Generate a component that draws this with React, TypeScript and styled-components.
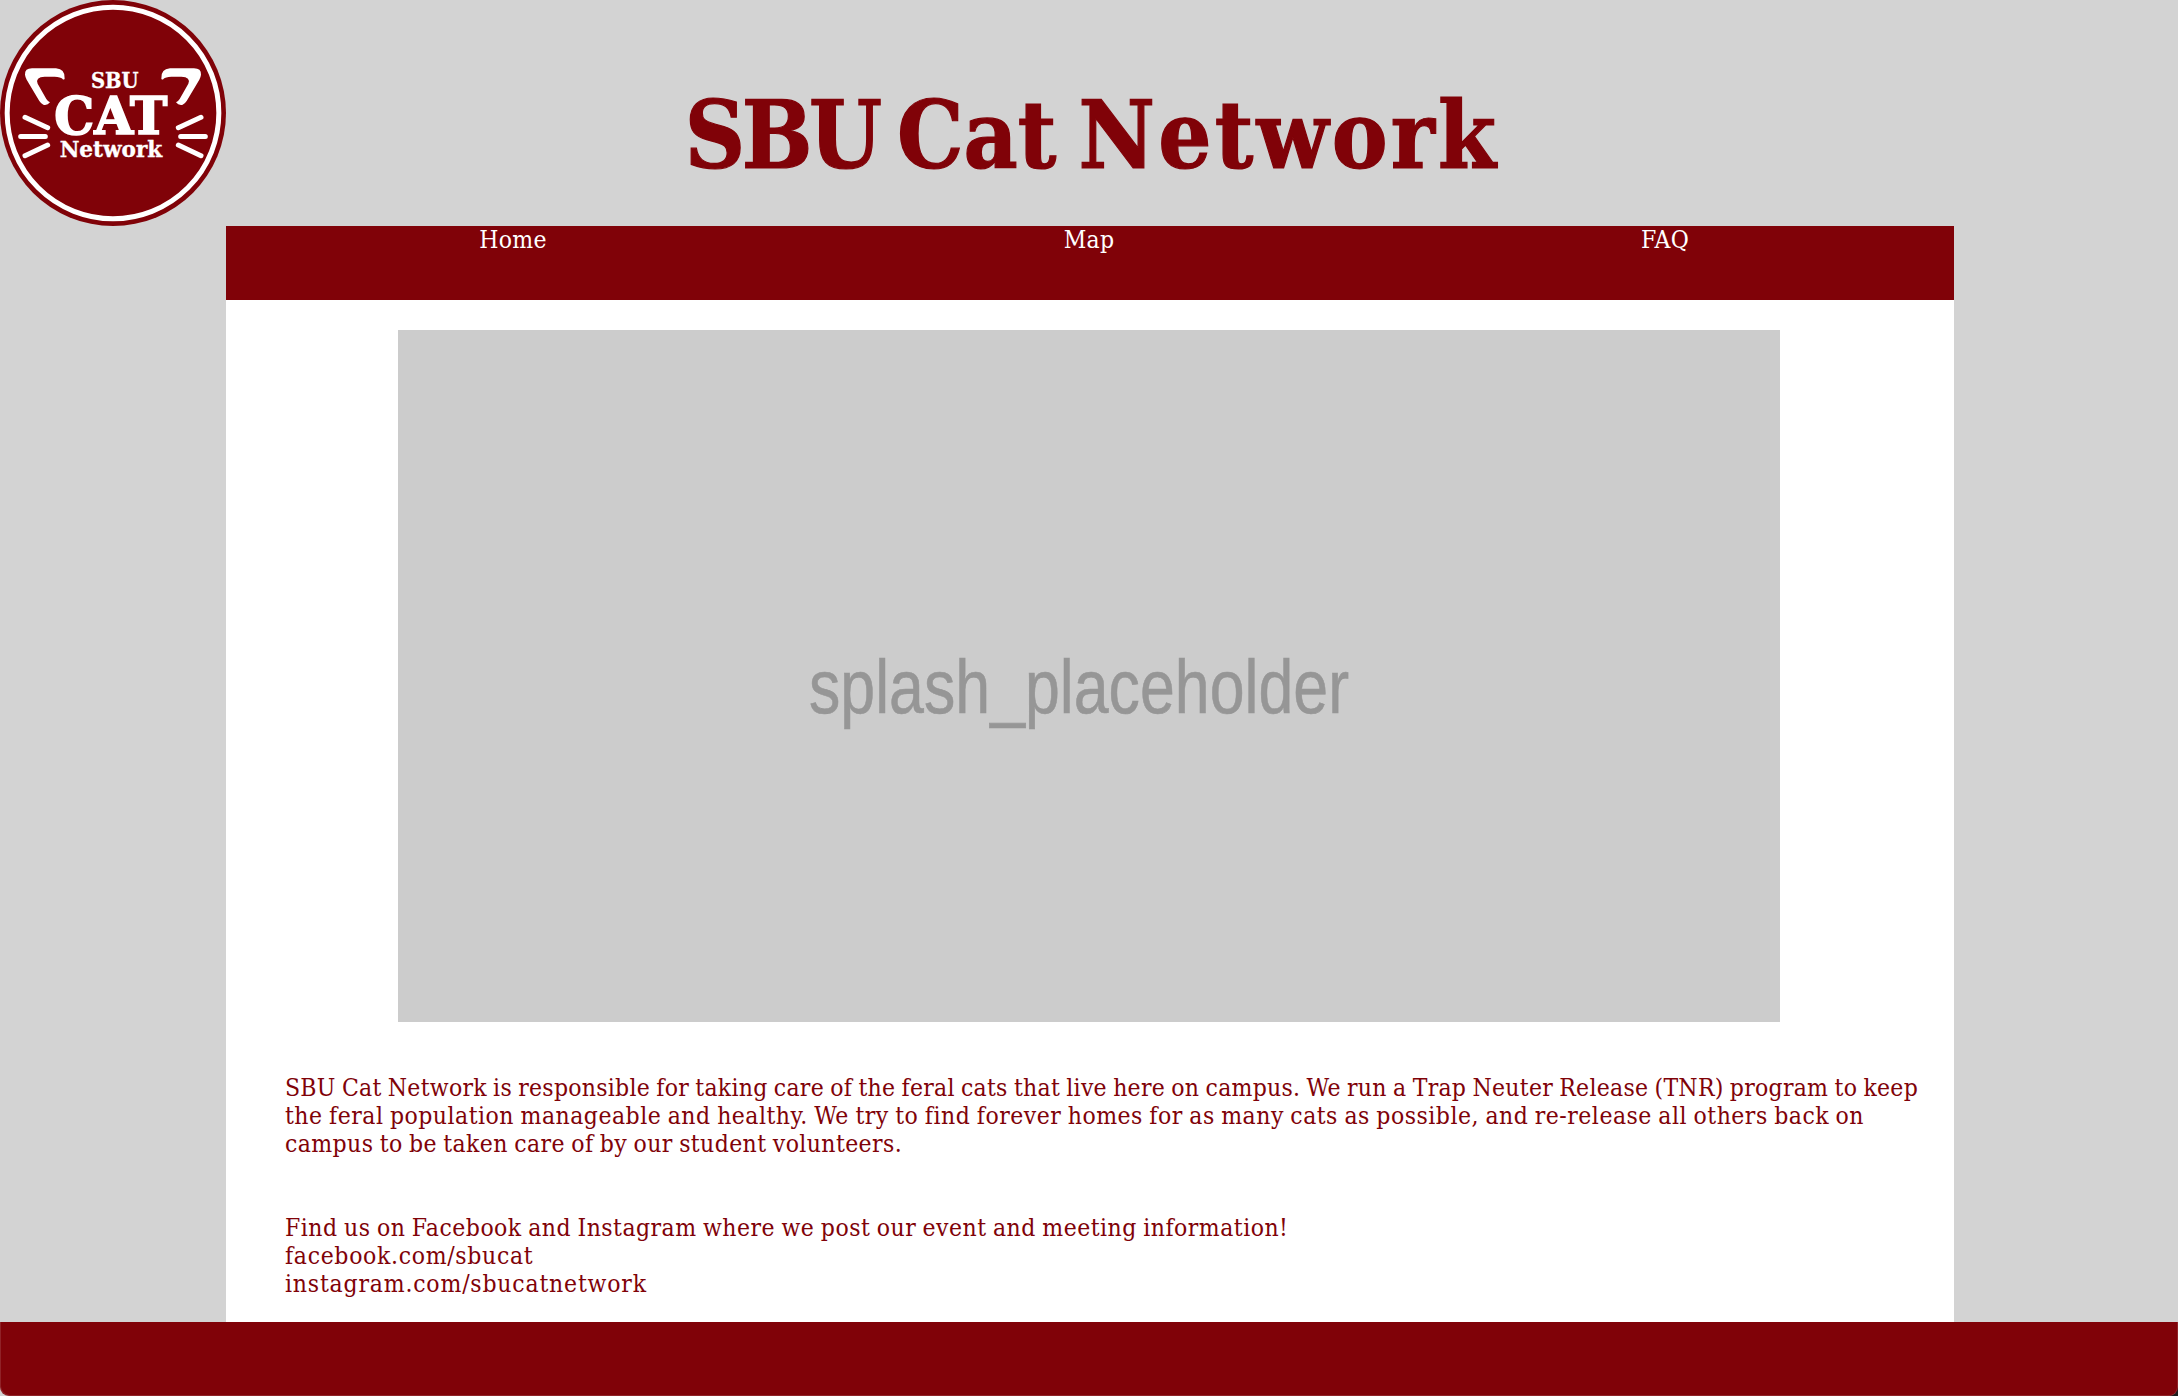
import React from 'react';
import styled, { createGlobalStyle } from 'styled-components';

const maroon = '#800208';
const slab = '"DejaVu Serif Condensed", "DejaVu Serif", serif';

const GlobalStyle = createGlobalStyle`
  body {
    margin: 0;
    background: #d3d3d3;
    font-family: ${slab};
    color: ${maroon};
  }
`;

const Page = styled.div`
  display: flex;
  flex-direction: column;
  height: 1396px;
  overflow: hidden;
`;

const Header = styled.header`
  display: grid;
  grid-template-columns: 226px 1728px 1fr;
  height: 226px;
`;

const Title = styled.h1`
  display: flex;
  align-items: center;
  justify-content: center;
  margin: 0;
  padding: 44px 0 0 4px;
  font-size: 93px;
  line-height: 1;
  font-weight: bold;
  white-space: pre;
  word-spacing: -7px;
  -webkit-text-stroke: 1.2px ${maroon};
`;

const Word = styled.span<{ $tracking: number }>`
  letter-spacing: ${(p) => p.$tracking}px;
`;

const Column = styled.div`
  display: flex;
  flex-direction: column;
  width: 1728px;
  height: 1096px;
  margin-left: 226px;
  background: #fff;
`;

const Nav = styled.nav`
  display: grid;
  grid-template-columns: repeat(3, 1fr);
  height: 74px;
  background: ${maroon};
`;

const NavLink = styled.a`
  padding-right: 2px;
  color: #fff;
  font-size: 24.5px;
  letter-spacing: 0.3px;
  line-height: 28px;
  text-align: center;
`;

const Splash = styled.figure`
  display: flex;
  width: 1382px;
  height: 692px;
  margin: 30px 0 52px 172px;
  background: #ccc;
`;

const Copy = styled.main`
  display: flex;
  flex-direction: column;
  gap: 56px;
  padding-left: 59px;
`;

const Paragraph = styled.p`
  margin: 0;
  font-size: 24.5px;
  line-height: 28px;
  word-spacing: -1px;
`;

const Line = styled.span<{ $tracking: number }>`
  display: block;
  white-space: nowrap;
  letter-spacing: ${(p) => p.$tracking}px;
`;

const FooterArea = styled.div`
  height: 74px;
  background: linear-gradient(to right, #d3d3d3 50%, #1c1c1c 50%);
`;

const Footer = styled.footer`
  height: 74px;
  border-radius: 0 0 9px 9px;
  background: ${maroon};
  box-shadow: inset 1px -1px 0 rgba(255, 255, 255, 0.13), inset -1px 0 0 rgba(255, 255, 255, 0.13);
`;

const EarAndWhiskers = () => (
  <>
    <path
      fill="#fff"
      d="M75 224Q74 205 96 205H168Q196 207 194 236Q191 241 187 236Q182 231 164 230H134Q105 231 113 251L139 297Q145 306 150 307Q142 317 130 314Q124 312 118 303L80 239Q76 232 75 224Z"
    />
    <path
      stroke="#fff"
      strokeWidth="15"
      strokeLinecap="round"
      fill="none"
      d="M75 352L143 383M62 409.500H136M75 467L143 435"
    />
  </>
);

const Logo = () => (
  <svg width="226" height="226" viewBox="0 0 678 678" role="img">
    <circle cx="339" cy="339" r="339" fill={maroon} />
    <circle cx="339" cy="339" r="317.500" fill="none" stroke="#fff" strokeWidth="15" />
    <EarAndWhiskers />
    <g transform="translate(678 0) scale(-1 1)">
      <EarAndWhiskers />
    </g>
    <g fill="#fff" stroke="#fff" fontFamily={slab} fontWeight="bold">
      <text x="273" y="265" fontSize="66" strokeWidth="1" textLength="143" lengthAdjust="spacingAndGlyphs">SBU</text>
      <text x="163" y="403" fontSize="157" strokeWidth="5" textLength="339" lengthAdjust="spacingAndGlyphs">CAT</text>
      <text x="179" y="470" fontSize="66" strokeWidth="1" textLength="308" lengthAdjust="spacingAndGlyphs">Network</text>
    </g>
  </svg>
);

const intro = [
  { text: 'SBU Cat Network is responsible for taking care of the feral cats that live here on campus. We run a Trap Neuter Release (TNR) program to keep', tracking: 0.26 },
  { text: 'the feral population manageable and healthy. We try to find forever homes for as many cats as possible, and re-release all others back on', tracking: 0.49 },
  { text: 'campus to be taken care of by our student volunteers.', tracking: 0.39 },
];

const social = [
  { text: 'Find us on Facebook and Instagram where we post our event and meeting information!', tracking: 0.47 },
  { text: 'facebook.com/sbucat', tracking: 0.67 },
  { text: 'instagram.com/sbucatnetwork', tracking: 0.8 },
];

export default function App() {
  return (
    <>
      <GlobalStyle />
      <Page>
        <Header>
          <Logo />
          <Title>
            <Word $tracking={-3.5}>SBU </Word>
            <Word $tracking={0}>Cat </Word>
            <Word $tracking={3.2}>Network</Word>
          </Title>
        </Header>
        <Column>
          <Nav>
            <NavLink>Home</NavLink>
            <NavLink>Map</NavLink>
            <NavLink>FAQ</NavLink>
          </Nav>
          <Splash>
            <svg width="1382" height="692">
              <text
                x="411"
                y="383"
                fill="#969696"
                stroke="#969696"
                strokeWidth="0.6"
                fontFamily='"Liberation Sans", Arial, sans-serif'
                fontSize="76"
                textLength="540"
                lengthAdjust="spacingAndGlyphs"
              >
                splash_placeholder
              </text>
            </svg>
          </Splash>
          <Copy>
            {[intro, social].map((lines, i) => (
              <Paragraph key={i}>
                {lines.map((line) => (
                  <Line key={line.text} $tracking={line.tracking}>{line.text}</Line>
                ))}
              </Paragraph>
            ))}
          </Copy>
        </Column>
        <FooterArea>
          <Footer />
        </FooterArea>
      </Page>
    </>
  );
}
